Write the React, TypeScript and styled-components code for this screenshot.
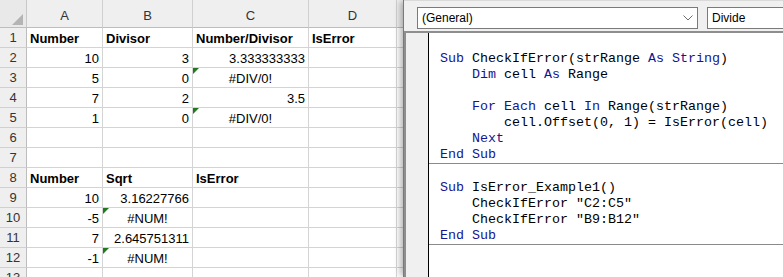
import React from "react";
import styled, { createGlobalStyle } from "styled-components";

const GlobalStyle = createGlobalStyle`
  html, body {
    margin: 0;
    padding: 0;
    background: #ffffff;
    overflow: hidden;
  }
`;

type Align = "left" | "right" | "center";

interface CellData {
  text?: string;
  align?: Align;
  bold?: boolean;
  flag?: boolean;
}

const Page = styled.div`
  display: flex;
  width: 783px;
  height: 277px;
  overflow: hidden;
`;

const SheetPane = styled.div`
  flex: none;
  width: 403px;
  height: 277px;
  overflow: hidden;
  background: #ffffff;
`;

const Grid = styled.div`
  display: grid;
  grid-template-columns: 27px 76px 90px 116px 88px 40px;
  grid-template-rows: 28px;
  grid-auto-rows: 20px;
  font-family: "Liberation Sans", Arial, sans-serif;
  font-size: 13px;
  color: #000;
`;

const Corner = styled.div`
  position: relative;
  background: #e9e9e9;
  border-right: 1px solid #c8c8c8;
  border-bottom: 1px solid #bdbdbd;
  box-sizing: border-box;

  &::after {
    content: "";
    position: absolute;
    right: 3px;
    bottom: 2px;
    width: 0;
    height: 0;
    border-left: 11px solid transparent;
    border-bottom: 11px solid #b4b4b4;
  }
`;

const ColHead = styled.div`
  display: flex;
  align-items: center;
  justify-content: center;
  padding-top: 4px;
  background: #efefef;
  color: #333;
  border-right: 1px solid #d0d0d0;
  border-bottom: 1px solid #bdbdbd;
  box-sizing: border-box;
`;

const RowHead = styled.div`
  display: flex;
  align-items: center;
  justify-content: center;
  background: #efefef;
  color: #333;
  border-right: 1px solid #bdbdbd;
  border-bottom: 1px solid #d0d0d0;
  box-sizing: border-box;
`;

const Cell = styled.div<{ $align: Align; $bold: boolean; $flag: boolean }>`
  position: relative;
  display: flex;
  align-items: center;
  justify-content: ${(p) =>
    p.$align === "right" ? "flex-end" : p.$align === "center" ? "center" : "flex-start"};
  padding: 1px 3px 0 3px;
  font-weight: ${(p) => (p.$bold ? 700 : 400)};
  border-right: 1px solid #d4d4d4;
  border-bottom: 1px solid #d4d4d4;
  box-sizing: border-box;
  white-space: nowrap;
  overflow: visible;

  &::before {
    content: "";
    display: ${(p) => (p.$flag ? "block" : "none")};
    position: absolute;
    left: 0;
    top: 0;
    width: 0;
    height: 0;
    border-top: 6px solid #1f7a1f;
    border-right: 6px solid transparent;
  }
`;

const VbaWindow = styled.div`
  position: relative;
  z-index: 1;
  flex: 1;
  min-width: 0;
  display: flex;
  flex-direction: column;
  background: #f0f0f0;
  border-left: 1px solid #3f86d0;
  box-shadow: -4px 0 6px -1px rgba(0, 0, 0, 0.28);
`;

const Toolbar = styled.div`
  flex: none;
  height: 31px;
  display: flex;
  align-items: flex-start;
  gap: 9px;
  padding: 6px 0 0 13px;
  box-sizing: border-box;
  border-top: 1px solid #dadada;
`;

const Dropdown = styled.div<{ $width: number }>`
  flex: none;
  width: ${(p) => p.$width}px;
  height: 22px;
  display: flex;
  align-items: center;
  justify-content: space-between;
  padding: 0 4px 0 4px;
  box-sizing: border-box;
  background: #ffffff;
  border: 1px solid #7a7a7a;
  font-family: "Liberation Sans", Arial, sans-serif;
  font-size: 12px;
  color: #000;
`;

const CodePane = styled.div`
  flex: 1;
  display: flex;
  border-top: 2px solid #8e8e8e;
  border-left: 2px solid #8e8e8e;
`;

const MarginBar = styled.div`
  flex: none;
  width: 22px;
  background: #f0f0f0;
  border-right: 1px solid #000;
`;

const CodeArea = styled.div`
  flex: 1;
  background: #ffffff;
  padding-top: 2px;
  font-family: "Liberation Mono", "Courier New", monospace;
  font-size: 13.33px;
  line-height: 16px;
  color: #000;
`;

const Proc = styled.div`
  border-bottom: 1px solid #8a8a8a;
`;

const Line = styled.div`
  height: 16px;
  padding-left: 11px;
  white-space: pre;
`;

const Kw = styled.span`
  color: #15158f;
`;

const KEYWORDS = new Set(["Sub", "Dim", "As", "String", "For", "Each", "In", "Next", "End"]);

const procs: string[][] = [
  [
    "",
    "Sub CheckIfError(strRange As String)",
    "    Dim cell As Range",
    "",
    "    For Each cell In Range(strRange)",
    "        cell.Offset(0, 1) = IsError(cell)",
    "    Next",
    "End Sub",
  ],
  [
    "",
    "Sub IsError_Example1()",
    '    CheckIfError "C2:C5"',
    '    CheckIfError "B9:B12"',
    "End Sub",
  ],
];

const t = (text: string): CellData => ({ text, align: "left" });
const b = (text: string): CellData => ({ text, align: "left", bold: true });
const n = (text: string): CellData => ({ text, align: "right" });
const e = (text: string): CellData => ({ text, align: "center", flag: true });

const rows: CellData[][] = [
  [b("Number"), b("Divisor"), b("Number/Divisor"), b("IsError")],
  [n("10"), n("3"), n("3.333333333")],
  [n("5"), n("0"), e("#DIV/0!")],
  [n("7"), n("2"), n("3.5")],
  [n("1"), n("0"), e("#DIV/0!")],
  [],
  [],
  [b("Number"), b("Sqrt"), b("IsError")],
  [n("10"), n("3.16227766")],
  [n("-5"), e("#NUM!")],
  [n("7"), n("2.645751311")],
  [n("-1"), e("#NUM!")],
  [],
];

const COLS = ["A", "B", "C", "D", ""];

const renderCode = (line: string) =>
  line.split(/(\W+)/).map((part, i) =>
    KEYWORDS.has(part) ? <Kw key={i}>{part}</Kw> : <React.Fragment key={i}>{part}</React.Fragment>
  );

const Chevron = () => (
  <svg width="10" height="6" viewBox="0 0 10 6">
    <polyline points="0.5,0.5 5,5 9.5,0.5" fill="none" stroke="#6d6d6d" strokeWidth="1" />
  </svg>
);

const App = () => (
  <Page>
    <GlobalStyle />
    <SheetPane>
      <Grid>
        <Corner />
        {COLS.map((c, i) => (
          <ColHead key={i}>{c}</ColHead>
        ))}
        {rows.map((row, r) => (
          <React.Fragment key={r}>
            <RowHead>{r + 1}</RowHead>
            {COLS.map((_, c) => {
              const d = row[c] || {};
              return (
                <Cell key={c} $align={d.align || "left"} $bold={!!d.bold} $flag={!!d.flag}>
                  {d.text}
                </Cell>
              );
            })}
          </React.Fragment>
        ))}
      </Grid>
    </SheetPane>
    <VbaWindow>
      <Toolbar>
        <Dropdown $width={281}>
          <span>(General)</span>
          <Chevron />
        </Dropdown>
        <Dropdown $width={120}>
          <span>Divide</span>
        </Dropdown>
      </Toolbar>
      <CodePane>
        <MarginBar />
        <CodeArea>
          {procs.map((p, i) => (
            <Proc key={i}>
              {p.map((line, j) => (
                <Line key={j}>{renderCode(line)}</Line>
              ))}
            </Proc>
          ))}
        </CodeArea>
      </CodePane>
    </VbaWindow>
  </Page>
);

export default App;
